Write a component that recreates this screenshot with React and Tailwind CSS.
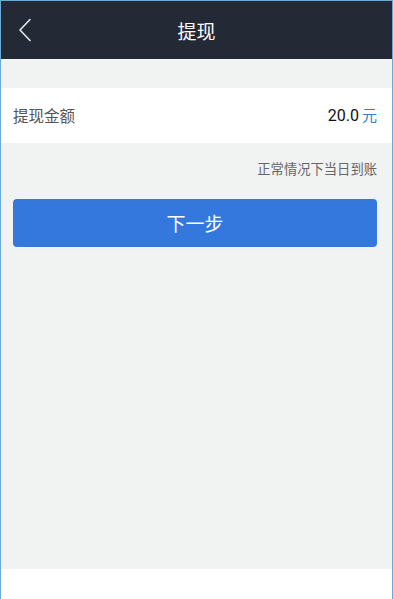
import React from 'react';

const font = { fontFamily: '"Noto Sans CJK SC", "Noto Sans", sans-serif' };

const App = () => {
  return (
    <div
      className="h-[599px] w-[393px] flex flex-col border-x border-t border-[#6ca9d4] bg-white overflow-hidden"
      style={font}
    >
      {/* Header */}
      <div className="relative h-[58px] flex items-center justify-center bg-[#232a36] shrink-0">
        <button className="absolute left-[15px] top-[17px] w-[18px] h-[24px] flex items-center justify-center">
          <svg width="16" height="24" viewBox="0 0 16 24" fill="none">
            <path d="M13 1.5 L3 12 L13 22.5" stroke="#e6e8eb" strokeWidth="1.6" strokeLinecap="round" strokeLinejoin="round" />
          </svg>
        </button>
        <h1 className="text-[19px] text-white leading-none">提现</h1>
      </div>

      {/* Content */}
      <div className="flex-1 flex flex-col bg-[#f1f3f3]">
        <div className="mt-[29px] h-[55px] bg-white flex items-center justify-between pl-[12px] pr-[15px]">
          <span className="text-[15.5px] text-[#555555]">提现金额</span>
          <span className="flex items-baseline gap-[3px]">
            <span className="text-[16px] text-[#111111]" style={{ fontFamily: 'Roboto, "Noto Sans", sans-serif' }}>20.0</span>
            <span className="text-[15px] text-[#2f7fd0]">元</span>
          </span>
        </div>

        <p className="mt-[16px] h-[20px] leading-[20px] text-right pr-[15px] text-[13.3px] text-[#666666]">
          正常情况下当日到账
        </p>

        <div className="pl-[12px] pr-[15px] mt-[20px]">
          <button className="w-full h-[48px] rounded-[4px] bg-[#3478dd] text-white text-[19px] flex items-center justify-center">
            下一步
          </button>
        </div>
      </div>

      <div className="h-[30px] bg-white shrink-0" />
    </div>
  );
};

export default App;
